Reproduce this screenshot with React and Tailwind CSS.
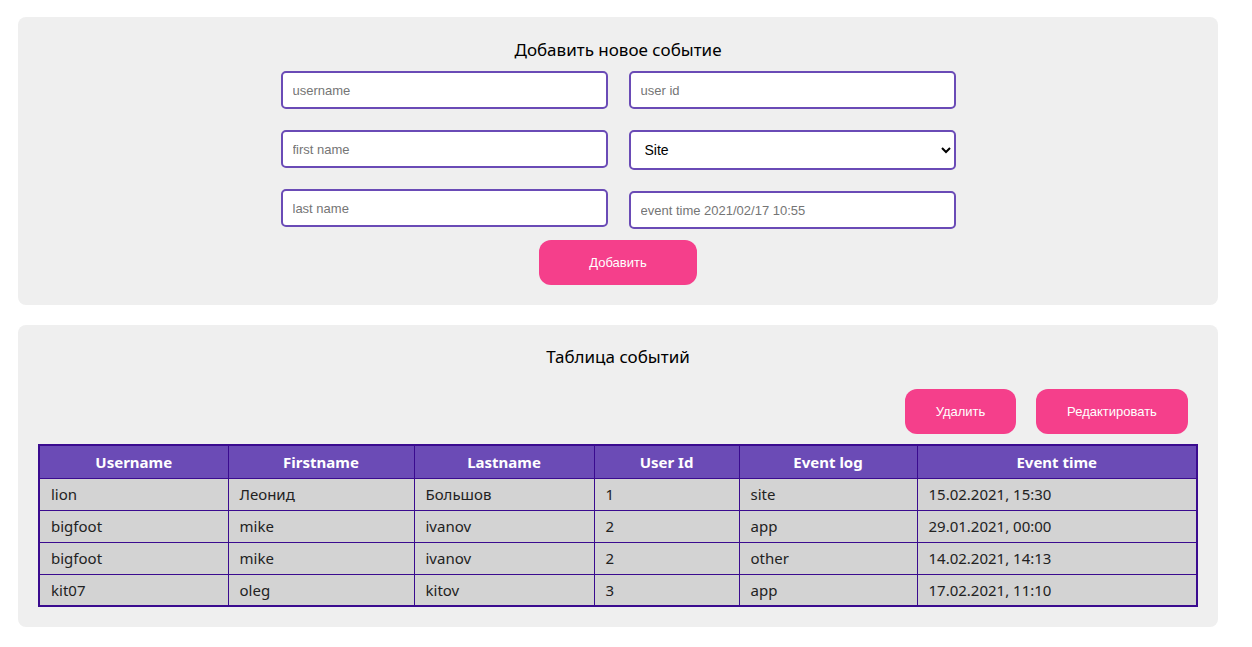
import { useState } from "react";

const rows = [
	{ username: "lion", firstname: "Леонид", lastname: "Большов", userId: "1", log: "site", time: "15.02.2021, 15:30" },
	{ username: "bigfoot", firstname: "mike", lastname: "ivanov", userId: "2", log: "app", time: "29.01.2021, 00:00" },
	{ username: "bigfoot", firstname: "mike", lastname: "ivanov", userId: "2", log: "other", time: "14.02.2021, 14:13" },
	{ username: "kit07", firstname: "oleg", lastname: "kitov", userId: "3", log: "app", time: "17.02.2021, 11:10" },
];

const inputCls =
	"w-full h-[38px] px-2.5 bg-white border-2 border-[#6a4bb6] rounded-[5px] text-[13px] text-black placeholder-[#757575] font-['Liberation_Sans',Arial,sans-serif] outline-none";

const btnCls =
	"h-[45px] bg-[#f53f8b] text-white text-[13px] rounded-[12px] font-['Liberation_Sans',Arial,sans-serif]";

const App = () => {
	const [site, setSite] = useState("site");

	return (
		<div className="min-h-screen bg-white pl-[18px] pr-[34px] pt-[17px] pb-5 font-['Noto_Sans',sans-serif] text-black">
			{/* форма добавления */}
			<div className="bg-[#efefef] rounded-lg pt-[21px] pb-5 flex flex-col items-center">
				<h2 className="text-[17px] leading-6 mb-[9px]">Добавить новое событие</h2>
				<div className="flex gap-[21px]">
					<div className="w-[327px] flex flex-col gap-[21px]">
						<input className={inputCls} placeholder="username" />
						<input className={inputCls} placeholder="first name" />
						<input className={inputCls} placeholder="last name" />
					</div>
					<div className="w-[327px] flex flex-col gap-[21px]">
						<input className={inputCls} placeholder="user id" />
						<select
							className={inputCls + " h-[40px] text-[14px] px-2"}
							value={site}
							onChange={(e) => setSite(e.target.value)}
						>
							<option value="site">Site</option>
							<option value="app">App</option>
							<option value="other">Other</option>
						</select>
						<input className={inputCls} placeholder="event time 2021/02/17 10:55" />
					</div>
				</div>
				<button className={btnCls + " w-[158px] mt-[11px]"}>Добавить</button>
			</div>

			{/* таблица */}
			<div className="bg-[#efefef] rounded-lg mt-5 pt-5 pb-5 px-5">
				<h2 className="text-[17px] leading-6 text-center">Таблица событий</h2>
				<div className="flex justify-end gap-5 mt-5 mr-[10px]">
					<button className={btnCls + " w-[111px]"}>Удалить</button>
					<button className={btnCls + " w-[152px]"}>Редактировать</button>
				</div>
				<table className="w-full mt-[10px] border-collapse table-fixed border-2 border-[#3a0b8f] text-[15px]">
					<colgroup>
						<col className="w-[189px]" />
						<col className="w-[186px]" />
						<col className="w-[180px]" />
						<col className="w-[145px]" />
						<col className="w-[178px]" />
						<col />
					</colgroup>
					<thead>
						<tr className="bg-[#6b4bb6] text-white h-[33px]">
							{["Username", "Firstname", "Lastname", "User Id", "Event log", "Event time"].map((h) => (
								<th key={h} className="border border-[#3a0b8f] font-bold text-center">
									{h}
								</th>
							))}
						</tr>
					</thead>
					<tbody>
						{rows.map((r, i) => (
							<tr key={i} className="bg-[#d3d3d3] h-8 text-[#222]">
								<td className="border border-[#3a0b8f] pl-[11px]">{r.username}</td>
								<td className="border border-[#3a0b8f] pl-[11px]">{r.firstname}</td>
								<td className="border border-[#3a0b8f] pl-[11px]">{r.lastname}</td>
								<td className="border border-[#3a0b8f] pl-[11px]">{r.userId}</td>
								<td className="border border-[#3a0b8f] pl-[11px]">{r.log}</td>
								<td className="border border-[#3a0b8f] pl-[11px]">{r.time}</td>
							</tr>
						))}
					</tbody>
				</table>
			</div>
		</div>
	);
};

export default App;
